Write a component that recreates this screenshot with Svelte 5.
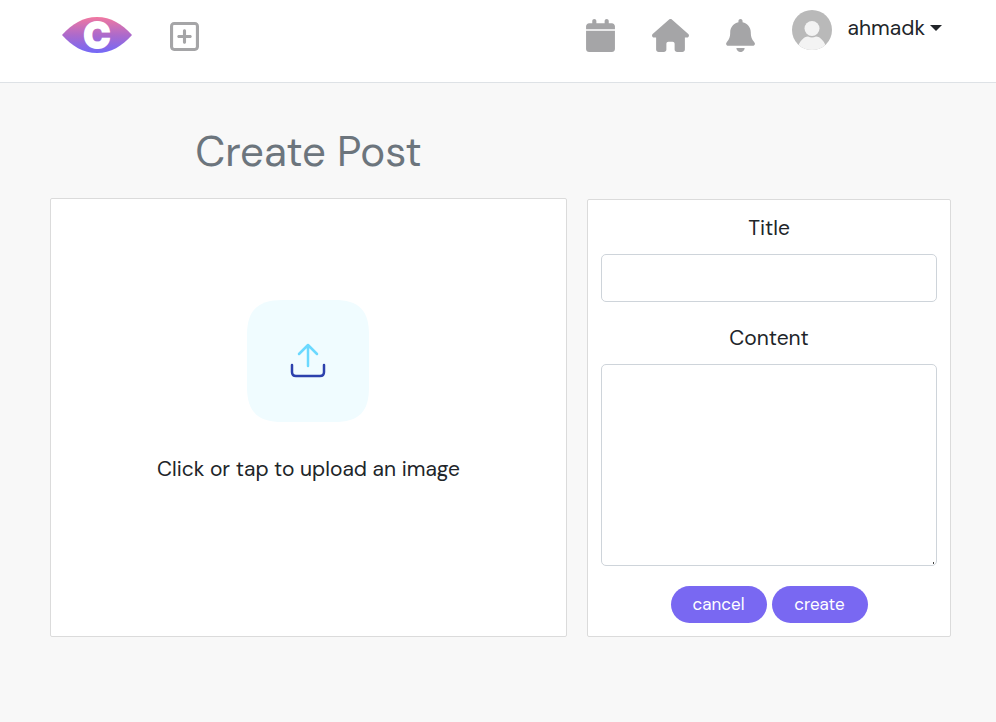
<script>
  let title = $state('');
  let content = $state('');

  const links = [
    {
      label: 'Events',
      box: '0 0 448 512',
      width: 29,
      path: 'M96 32V64H48C21.5 64 0 85.5 0 112v48H448V112c0-26.5-21.5-48-48-48H352V32c0-17.7-14.3-32-32-32s-32 14.3-32 32V64H160V32c0-17.7-14.3-32-32-32S96 14.3 96 32zM448 184H0V464c0 26.5 21.5 48 48 48H400c26.5 0 48-21.5 48-48V184z'
    },
    {
      label: 'Home',
      box: '0 0 576 512',
      width: 37,
      path: 'M575.8 255.5c0 18-15 32.1-32 32.1h-32l.7 160.2c0 2.7-.2 5.4-.5 8.1V472c0 22.1-17.9 40-40 40H456c-1.1 0-2.2 0-3.3-.1c-1.4 .1-2.8 .1-4.2 .1H416 392c-22.1 0-40-17.9-40-40V448 384c0-17.7-14.3-32-32-32H256c-17.7 0-32 14.3-32 32v64 24c0 22.1-17.9 40-40 40H160 128.1c-1.5 0-3-.1-4.5-.2c-1.2 .1-2.4 .2-3.6 .2H104c-22.1 0-40-17.9-40-40V360c0-.9 0-1.9 .1-2.8V287.6H32c-18 0-32-14-32-32.1c0-9 3-17 10-24L266.4 8c7-7 15-8 22-8s15 2 21 7L564.8 231.5c8 7 12 15 11 24z'
    },
    {
      label: 'Notifications',
      box: '0 0 448 512',
      width: 29,
      path: 'M224 0c-17.7 0-32 14.3-32 32V51.2C119 66 64 130.6 64 208v18.8c0 47-17.3 92.4-48.5 127.6l-7.4 8.3c-8.4 9.4-10.4 22.9-5.3 34.4S19.4 416 32 416H416c12.6 0 24-7.4 29.2-18.9s3.1-25-5.3-34.4l-7.4-8.3C401.3 319.2 384 273.9 384 226.8V208c0-77.4-55-142-128-156.8V32c0-17.7-14.3-32-32-32zm45.3 493.3c12-12 18.7-28.3 18.7-45.3H224 160c0 17 6.7 33.3 18.7 45.3s28.3 18.7 45.3 18.7s33.3-6.7 45.3-18.7z'
    }
  ];
</script>

<header>
  <nav class="side">
    <a class="logo" href="/" aria-label="Home page">
      <svg width="70" height="36" viewBox="0 0 70 36">
        <defs>
          <linearGradient id="eye" x1="0" y1="0" x2="0" y2="1">
            <stop offset="0" stop-color="#f178a0" />
            <stop offset="0.5" stop-color="#ad6acb" />
            <stop offset="1" stop-color="#7369f8" />
          </linearGradient>
        </defs>
        <path d="M0 18C10 7 21 0 35 0S60 7 70 18C60 29 49 36 35 36S10 29 0 18Z" fill="url(#eye)" />
        <text class="mark" x="35" y="31" text-anchor="middle">C</text>
      </svg>
    </a>
    <a class="icon" href="/posts/create" aria-label="Create post">
      <svg width="29" height="35" viewBox="0 0 448 512">
        <path d="M64 80c-8.8 0-16 7.2-16 16V416c0 8.8 7.2 16 16 16H384c8.8 0 16-7.2 16-16V96c0-8.8-7.2-16-16-16H64zM0 96C0 60.7 28.7 32 64 32H384c35.3 0 64 28.7 64 64V416c0 35.3-28.7 64-64 64H64c-35.3 0-64-28.7-64-64V96zM200 344V280H136c-13.3 0-24-10.7-24-24s10.7-24 24-24h64V168c0-13.3 10.7-24 24-24s24 10.7 24 24v64h64c13.3 0 24 10.7 24 24s-10.7 24-24 24H248v64c0 13.3-10.7 24-24 24s-24-10.7-24-24z" />
      </svg>
    </a>
  </nav>
  <nav class="side right">
    {#each links as link}
      <a class="icon" href="/{link.label.toLowerCase()}" aria-label={link.label}>
        <svg width={link.width} height="33" viewBox={link.box}><path d={link.path} /></svg>
      </a>
    {/each}
    <button class="user" type="button" aria-haspopup="menu">
      <svg width="40" height="40" viewBox="0 0 40 40" aria-hidden="true">
        <defs><clipPath id="round"><circle cx="20" cy="20" r="20" /></clipPath></defs>
        <g clip-path="url(#round)">
          <rect width="40" height="40" fill="#b9b9b9" />
          <circle cx="20" cy="18.5" r="7.5" fill="#f3f3f3" />
          <path d="M5 40C7 31 12 26.5 16 26.5Q20 28.5 24 26.5C28 26.5 33 31 35 40Z" fill="#f3f3f3" />
        </g>
      </svg>
      <span class="name">ahmadk<i class="caret"></i></span>
    </button>
  </nav>
</header>

<main>
  <section class="picture">
    <h1>Create Post</h1>
    <button class="card upload" type="button">
      <svg width="124" height="124" viewBox="0 0 124 124" fill="none" stroke-width="2.5" stroke-linecap="round" stroke-linejoin="round" aria-hidden="true">
        <path d="M0 36C0 11 11 1 36 1H87C112 1 122 11 122 36V88C122 113 112 123 87 123H36C11 123 0 113 0 88Z" fill="#f0fcff" />
        <path d="M61 67V46M52 55L61 46L70 55" stroke="#6bd9ff" />
        <path d="M45 66V73Q45 77 49 77H73Q77 77 77 73V66" stroke="#2c41ad" />
      </svg>
      <span>Click or tap to upload an image</span>
    </button>
  </section>

  <form class="card" onsubmit={(e) => e.preventDefault()}>
    <label for="title">Title</label>
    <input id="title" type="text" bind:value={title} />
    <label for="content">Content</label>
    <textarea id="content" rows="6" bind:value={content}></textarea>
    <div class="actions">
      <button type="button">cancel</button>
      <button type="submit">create</button>
    </div>
  </form>
</main>

<style>
  :global(body) {
    margin: 0;
    background: #f8f8f8;
  }
  header, main, button, input, textarea {
    font-family: "DM Sans", Inter, sans-serif;
    font-size: 21px;
    font-weight: 400;
    line-height: 30px;
    color: #212529;
    box-sizing: border-box;
  }
  svg {
    display: block;
    overflow: visible;
  }
  header {
    display: flex;
    justify-content: space-between;
    padding: 10px 54px 28px 62px;
    background: #fff;
    border-bottom: 1px solid #dee2e6;
  }
  .side {
    display: flex;
    align-items: flex-start;
    gap: 38px;
  }
  .right {
    gap: 37px;
  }
  .logo {
    padding-top: 7px;
  }
  .icon {
    padding-top: 9px;
    fill: #a5a5a7;
  }
  .mark {
    font: 800 36px Inter, sans-serif;
    fill: #fff;
    stroke: #fff;
    stroke-width: 2px;
  }
  .user {
    display: flex;
    align-items: flex-start;
    gap: 16px;
    padding: 0;
    border: 0;
    background: none;
    cursor: pointer;
  }
  .name {
    display: flex;
    align-items: center;
    gap: 5px;
    padding-top: 3px;
  }
  .caret {
    border: 6px solid transparent;
    border-top-color: #212529;
    border-bottom: 0;
  }
  main {
    display: grid;
    grid-template-columns: 517fr 364fr;
    gap: 20px;
    align-items: end;
    padding: 45px 45px 40px 50px;
  }
  h1 {
    margin: 0 0 22px;
    font-size: 42px;
    font-weight: 400;
    line-height: 48px;
    text-align: center;
    color: #6c757d;
  }
  .card {
    border: 1px solid #dbdbdb;
    border-radius: 2px;
    background: #fff;
  }
  .upload {
    display: flex;
    flex-direction: column;
    align-items: center;
    gap: 31px;
    width: 100%;
    padding: 100px 16px 152px;
    cursor: pointer;
  }
  form {
    display: flex;
    flex-direction: column;
    padding: 13px;
  }
  label {
    margin-bottom: 11px;
    text-align: center;
  }
  input, textarea {
    width: 100%;
    padding: 8px 12px;
    border: 1px solid #ced4da;
    border-radius: 5px;
    background: #fff;
  }
  input {
    height: 48px;
    margin-bottom: 21px;
  }
  textarea {
    height: 202px;
    resize: none;
    background: linear-gradient(#444, #444) right 2px bottom 1px / 1px 2px no-repeat #fff;
  }
  .actions {
    display: flex;
    justify-content: center;
    gap: 5px;
    margin-top: 20px;
  }
  .actions button {
    width: 96px;
    padding: 4px 0;
    border: 0;
    border-radius: 20px;
    background: #7968f2;
    color: #fff;
    font-size: 17px;
    line-height: 29px;
    cursor: pointer;
  }
</style>
